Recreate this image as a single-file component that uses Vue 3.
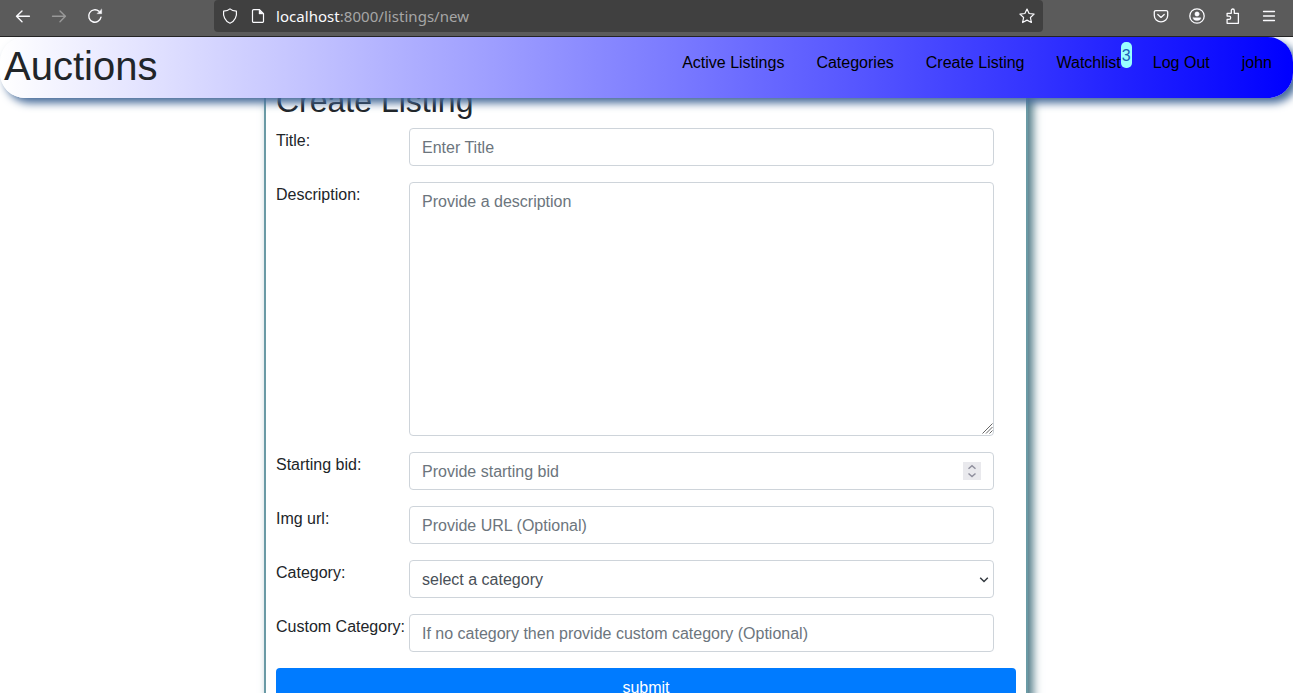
<script setup>
const links = [
  { label: 'Active Listings' },
  { label: 'Categories' },
  { label: 'Create Listing' },
  { label: 'Watchlist', badge: 3 },
  { label: 'Log Out' },
  { label: 'john' }
]
</script>

<template>
  <div class="window">
    <div class="toolbar">
      <div class="history">
        <svg width="16" height="16" viewBox="0 0 16 16" class="ico"><path d="M14.400 8.300H1.800M7 2.900 1.500 8.300 7 13.700" /></svg>
        <svg width="16" height="16" viewBox="0 0 16 16" class="ico dim"><path d="M1.500 8.300h12.700M9 2.900l5.400 5.400L9 13.700" /></svg>
        <svg width="16" height="16" viewBox="0 0 16 16" class="ico"><path d="M14 9.200A6.200 6.200 0 1 1 12 3.300" /><path class="solid" d="M14.700 1.300v4.400h-4.500z" /></svg>
      </div>
      <div class="address">
        <svg width="16" height="16" viewBox="0 0 16 16" class="ico thin"><path d="M8 .9C6.500 2.200 4 3 1.600 3.200.900 7.800 3 13.500 8 15.200c5-1.700 7.100-7.400 6.400-12C12 3 9.500 2.200 8 .9z" /></svg>
        <svg width="16" height="16" viewBox="0 0 16 16" class="ico thin page"><path d="M3.700 1.600h5.800l4 4v7.600a1.200 1.200 0 0 1-1.200 1.200H3.700a1.200 1.200 0 0 1-1.200-1.200V2.800a1.200 1.200 0 0 1 1.200-1.200z" /><path class="solid" d="M9 1.500V6h4.500z" /></svg>
        <span class="url"><b>localhost</b>:8000/listings/new</span>
        <svg width="16" height="16" viewBox="0 0 16 16" class="ico thin star"><path d="m8 1 2.100 4.500 5 .6-3.700 3.400 1 5L8 12.100l-4.400 2.400 1-5L.9 6.100l5-.6z" /></svg>
      </div>
      <div class="actions">
        <svg width="16" height="16" viewBox="0 0 16 16" class="ico mid"><path d="M2.800 2.600h10.400a1.500 1.500 0 0 1 1.500 1.500v3.400a6.700 6.300 0 0 1-13.400 0V4.100a1.500 1.500 0 0 1 1.500-1.500zM4.800 6.500 8 9.400l3.200-2.900" /></svg>
        <svg width="16" height="16" viewBox="0 0 16 16" class="ico mid"><circle cx="8" cy="8" r="7.200" /><circle cx="8" cy="6" r="2.200" class="fill" /><path class="fill" d="M4.200 9.800h7.600c.3 1.500-1.300 2.700-3.800 2.700s-4.100-1.200-3.800-2.700z" /></svg>
        <svg width="16" height="16" viewBox="0 0 16 16" class="ico mid"><path d="M2.100 15.300v-4h2a1.600 1.600 0 0 0 0-3.200h-2V5.300h4.200V2.500a1.500 1.500 0 0 1 3 0v2.800h4.100v10z" /></svg>
        <svg width="16" height="16" viewBox="0 0 16 16" class="ico mid"><path d="M2.500 3.500h11M2.500 8h11M2.500 12.500h11" /></svg>
      </div>
    </div>

    <header class="header">
      <h1>Auctions</h1>
      <nav>
        <a v-for="l in links" :key="l.label">{{ l.label }}<span v-if="l.badge" class="badge">{{ l.badge }}</span></a>
      </nav>
    </header>

    <main class="panel">
      <h2>Create Listing</h2>
      <div class="row"><label>Title:</label><input class="control" placeholder="Enter Title" /></div>
      <div class="row">
        <label>Description:</label>
        <div class="field">
          <textarea class="control area" placeholder="Provide a description"></textarea>
          <svg class="grip" width="11" height="11" viewBox="0 0 11 11"><path d="M.5 10.500l10-10M4 10.500 10.500 4M7.500 10.500l3-3" /></svg>
        </div>
      </div>
      <div class="row">
        <label>Starting bid:</label>
        <div class="field">
          <input class="control" placeholder="Provide starting bid" />
          <svg class="spinner" width="18" height="18" viewBox="0 0 18 18"><path d="M5.500 6.700 9 3.700l3.500 3M5.500 11.500l3.500 3 3.500-3" /></svg>
        </div>
      </div>
      <div class="row"><label>Img url:</label><input class="control" placeholder="Provide URL (Optional)" /></div>
      <div class="row">
        <label>Category:</label>
        <div class="field">
          <select class="control"><option>select a category</option></select>
          <svg class="chevron" width="10" height="8" viewBox="0 0 10 8"><path d="m1.200 1.800 3.800 3.700 3.800-3.700" /></svg>
        </div>
      </div>
      <div class="row"><label>Custom Category:</label><input class="control" placeholder="If no category then provide custom category (Optional)" /></div>
      <button class="submit">submit</button>
    </main>
  </div>
</template>

<style>
body { background: #fff; overflow: hidden; }
</style>

<style scoped>
* { box-sizing: border-box; }
.window {
  height: 693px;
  overflow: hidden;
  font: 16px/24px "Liberation Sans", Arial, sans-serif;
  color: #212529;
}
.toolbar {
  position: relative;
  z-index: 3;
  display: flex;
  justify-content: space-between;
  height: 37px;
  background: #5b5b5b;
  border-bottom: 1px solid #242424;
}
svg { display: block; flex: none; }
.ico { fill: none; stroke: #fbfbfe; stroke-width: 1.4; stroke-linecap: round; stroke-linejoin: round; }
.mid { stroke-width: 1.300; }
.thin { stroke-width: 1.200; }
.dim { stroke: #999; }
.solid, .fill { fill: #fbfbfe; stroke-width: .4; }
.history { display: flex; gap: 20px; padding: 8px 0 0 15px; width: 214px; }
.address {
  display: flex;
  align-items: center;
  width: 829px;
  height: 32px;
  padding: 0 8px;
  background: #404040;
  border-radius: 4px;
}
.page { margin-left: 12px; }
.url {
  margin-left: 10px;
  font: 15px/20px "Noto Sans", sans-serif;
  letter-spacing: .04px;
  color: #a6a6a6;
  white-space: nowrap;
}
.url b { font-weight: 400; color: #fbfbfe; }
.star { margin-left: auto; }
.actions { display: flex; gap: 20px; width: 250px; padding: 8px 16px 0 0; justify-content: flex-end; }

.header {
  position: relative;
  z-index: 2;
  display: flex;
  justify-content: space-between;
  height: 61px;
  padding: 5px 21px 0 4px;
  border-radius: 25px;
  background: linear-gradient(to right, #fff, #00f);
  box-shadow: 5px 5px 8px #456a99;
}
h1 { margin: 0; font-size: 40px; line-height: 48px; font-weight: 400; }
nav { display: flex; gap: 32px; padding-top: 9px; color: #000; }
nav a { position: relative; white-space: nowrap; }
.badge {
  position: absolute;
  left: 100%;
  top: -9px;
  width: 11px;
  height: 26px;
  line-height: 27px;
  text-align: center;
  border-radius: 5px;
  background: #9ff;
  color: #1c5fb8;
}

.panel {
  width: 764px;
  height: 700px;
  margin: -28.400px auto 0 264px;
  padding: 10px;
  border: 2px solid #6a9aa5;
  box-shadow: 5px 5px 9px #4d7885;
}
h2 { margin: 0 0 8px; font-size: 32px; line-height: 38.400px; font-weight: 400; }
.row { display: flex; margin-bottom: 16px; }
label { width: 133px; flex: none; padding-top: 1px; white-space: nowrap; }
.field { position: relative; display: flex; }
.control {
  display: block;
  width: 585px;
  height: 38px;
  margin: 0;
  padding: 7px 12px 5px;
  border: 1px solid #ced4da;
  border-radius: 4px;
  background: #fff;
  font: inherit;
  color: #495057;
  appearance: none;
  outline: none;
}
.control::placeholder { color: #6c757d; opacity: 1; }
.area { height: 254px; resize: none; }
.grip { position: absolute; right: 1px; bottom: 2px; fill: none; stroke: #666; stroke-width: 1; }
.spinner { position: absolute; right: 13px; top: 10px; background: #e9e9ed; fill: none; stroke: #8f8f9d; stroke-width: 1.500; }
.chevron { position: absolute; right: 5px; top: 16px; fill: none; stroke: #343a40; stroke-width: 1.500; }
.submit {
  display: block;
  width: 740px;
  height: 38px;
  padding: 2px 0 0;
  border: 0;
  border-radius: 4px;
  background: #007bff;
  color: #fff;
  font: inherit;
}
</style>
